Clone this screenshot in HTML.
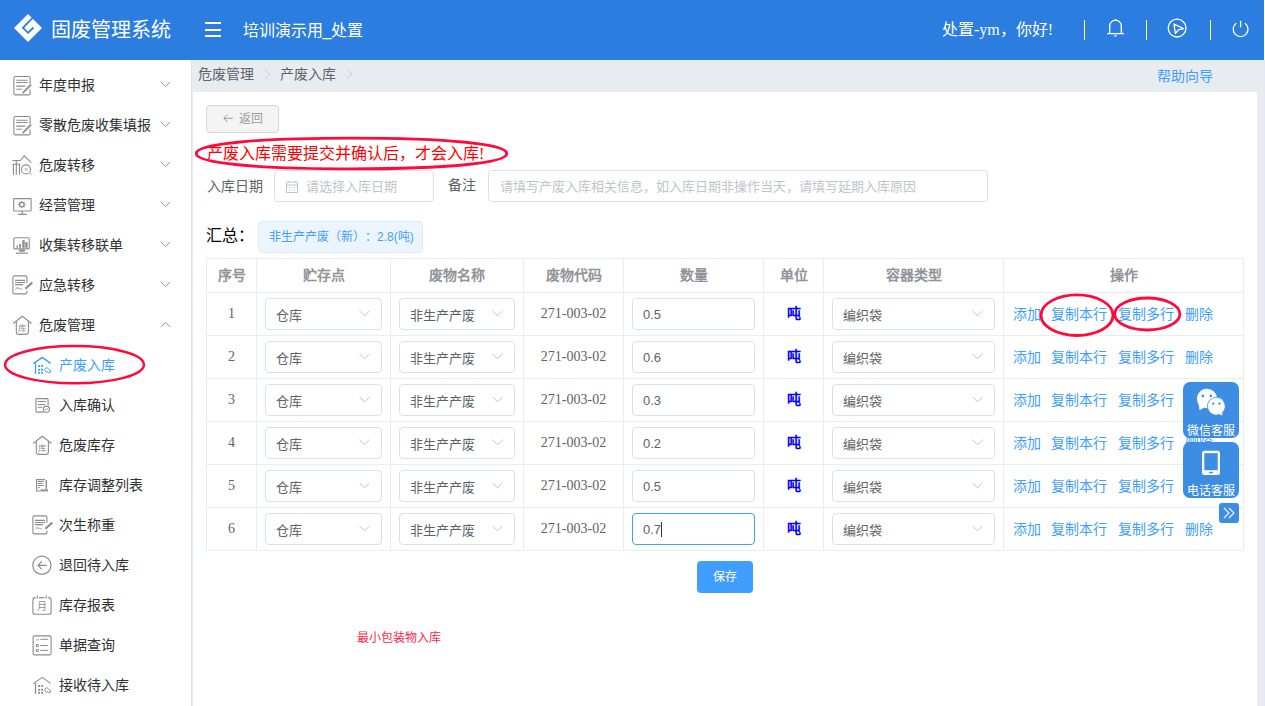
<!DOCTYPE html>
<html lang="zh-CN">
<head>
<meta charset="utf-8">
<style>
*{box-sizing:border-box;margin:0;padding:0}
html,body{width:1265px;height:706px;overflow:hidden;background:#fff;font-family:"Liberation Sans",sans-serif;text-spacing-trim:space-all;}
.abs{position:absolute}
.hdr{position:absolute;left:0;top:0;width:1264px;height:60px;background:#2c7de0;color:#fff}
.side{position:absolute;left:0;top:60px;width:192px;height:646px;background:#fff;border-right:1px solid #e2e2e2}
.main{position:absolute;left:192px;top:60px;width:1073px;border-right:1px solid #e4e8f2;height:646px;background:#e8ecf1}
.card{position:absolute;left:193px;top:92px;width:1064px;height:614px;background:#fff}
.mi{position:absolute;left:0;width:190px;height:40px;line-height:40px;font-size:14px;color:#303133;white-space:nowrap}
.mi .t{position:absolute;left:38.7px;top:0}
.mi.sub .t{left:58.7px}
.mi svg.ic{position:absolute;left:12px;top:10px;width:20px;height:20px}
.mi.sub svg.ic{left:32px}
.chev{position:absolute;left:160px;top:16px;width:11px;height:7px}
.bc{position:absolute;top:60px;height:32px;line-height:28px;font-size:14px;color:#606266}
.lbl{position:absolute;font-size:14px;color:#606266;line-height:20px}
.inp{position:absolute;border:1px solid #dcdfe6;border-radius:4px;background:#fff}
.ph{position:absolute;font-size:13px;color:#c0c4cc;white-space:nowrap}
table.tb{position:absolute;left:206px;top:258px;border-collapse:collapse;table-layout:fixed}
.tb td,.tb th{border:1px solid #e9ecf4;padding:0;position:relative;text-align:center}
.tb th{height:34px;font-size:14px;color:#909399;font-weight:bold;padding-bottom:3px}
.tb td{height:43px}
.sel{position:absolute;top:5px;height:32px;border:1px solid #dcdfe6;border-radius:4px;background:#fff;text-align:left}
.sel span{position:absolute;left:10px;top:0;line-height:34px;font-size:13px;color:#606266;white-space:nowrap}
.sel svg{position:absolute;top:11px;width:11px;height:7px}
.num{font-family:"Liberation Serif",serif;font-size:14px;color:#606266;position:relative;top:-1px}
.ops{position:absolute;left:0;top:0;width:100%;height:43px;line-height:43px;font-size:14px;color:#409eff;white-space:nowrap;text-align:left}
.ops span{position:absolute;top:0}
.dun{color:#0000ff;font-weight:bold;font-size:14px;position:relative;top:-2px}
</style>
</head>
<body>
<div class="main"></div>
<div class="card"></div>

<!-- header -->
<div class="hdr">
  <svg class="abs" style="left:13px;top:13px" width="30" height="30" viewBox="0 0 30 30">
    <path d="M15 1 L29 15 L15 29 L1 15 Z" fill="#fff"/>
    <path d="M20.4 4.2 L9.9 14.8 L15.1 19.8 L20.5 14.5" fill="none" stroke="#2c7de0" stroke-width="1.8"/>
  </svg>
  <div class="abs" style="left:51px;top:16px;font-size:20px;line-height:28px;white-space:nowrap">固废管理系统</div>
  <div class="abs" style="left:205px;top:22px;width:16px;height:2px;background:#fff"></div>
  <div class="abs" style="left:205px;top:29px;width:16px;height:2px;background:#fff"></div>
  <div class="abs" style="left:205px;top:35px;width:16px;height:2px;background:#fff"></div>
  <div class="abs" style="left:242.5px;top:20px;font-size:16px;line-height:22px;white-space:nowrap">培训演示用_处置</div>
  <div class="abs" style="left:942px;top:19px;font-size:16px;line-height:22px;white-space:nowrap;font-family:'Liberation Serif',serif">处置-ym，你好!</div>
  <div class="abs" style="left:1084px;top:20px;width:1px;height:20px;background:#fff"></div>
  <div class="abs" style="left:1146px;top:20px;width:1px;height:20px;background:#fff"></div>
  <div class="abs" style="left:1210px;top:20px;width:1px;height:20px;background:#fff"></div>
  <svg class="abs" style="left:1100px;top:14px" width="30" height="26" viewBox="1100 14 30 26" fill="none" stroke="#fff" stroke-width="1.3">
    <path d="M1109.7 33 V26 A5.8 5.8 0 0 1 1121.3 26 V33"/>
    <path d="M1107 33.6 H1124"/>
    <path d="M1115.5 19.2 V20.5"/>
    <path d="M1114.3 35.8 H1116.7"/>
  </svg>
  <svg class="abs" style="left:1160px;top:12px" width="34" height="34" viewBox="1160 12 34 34" fill="none" stroke="#fff" stroke-width="1.3">
    <circle cx="1177.1" cy="28.1" r="8.9"/>
    <path d="M1174 24 L1183.5 28.6 L1178.3 29.8 L1175.3 33.6 Z" stroke-linejoin="round"/>
  </svg>
  <svg class="abs" style="left:1226px;top:14px" width="30" height="30" viewBox="1226 14 30 30" fill="none" stroke="#fff" stroke-width="1.3">
    <path d="M1236.2 23.2 A7.4 7.4 0 1 0 1245 23.2"/>
    <path d="M1240.6 20.8 V27.4"/>
  </svg>
</div>

<!-- sidebar -->
<div class="side"></div>
<div class="mi" style="top:65px"><span class="t">年度申报</span><svg class="chev" viewBox="0 0 11 7"><path d="M0.8 1 L5.5 5.6 L10.2 1" fill="none" stroke="#909399" stroke-width="1"/></svg></div>
<div class="mi" style="top:105px"><span class="t">零散危废收集填报</span><svg class="chev" viewBox="0 0 11 7"><path d="M0.8 1 L5.5 5.6 L10.2 1" fill="none" stroke="#909399" stroke-width="1"/></svg></div>
<div class="mi" style="top:145px"><span class="t">危废转移</span><svg class="chev" viewBox="0 0 11 7"><path d="M0.8 1 L5.5 5.6 L10.2 1" fill="none" stroke="#909399" stroke-width="1"/></svg></div>
<div class="mi" style="top:185px"><span class="t">经营管理</span><svg class="chev" viewBox="0 0 11 7"><path d="M0.8 1 L5.5 5.6 L10.2 1" fill="none" stroke="#909399" stroke-width="1"/></svg></div>
<div class="mi" style="top:225px"><span class="t">收集转移联单</span><svg class="chev" viewBox="0 0 11 7"><path d="M0.8 1 L5.5 5.6 L10.2 1" fill="none" stroke="#909399" stroke-width="1"/></svg></div>
<div class="mi" style="top:265px"><span class="t">应急转移</span><svg class="chev" viewBox="0 0 11 7"><path d="M0.8 1 L5.5 5.6 L10.2 1" fill="none" stroke="#909399" stroke-width="1"/></svg></div>
<div class="mi" style="top:305px"><span class="t">危废管理</span><svg class="chev" viewBox="0 0 11 7"><path d="M0.8 6 L5.5 1.4 L10.2 6" fill="none" stroke="#909399" stroke-width="1"/></svg></div>
<div class="mi sub" style="top:345px;color:#409eff"><span class="t">产废入库</span></div>
<div class="mi sub" style="top:385px"><span class="t">入库确认</span></div>
<div class="mi sub" style="top:425px"><span class="t">危废库存</span></div>
<div class="mi sub" style="top:465px"><span class="t">库存调整列表</span></div>
<div class="mi sub" style="top:505px"><span class="t">次生称重</span></div>
<div class="mi sub" style="top:545px"><span class="t">退回待入库</span></div>
<div class="mi sub" style="top:585px"><span class="t">库存报表</span></div>
<div class="mi sub" style="top:625px"><span class="t">单据查询</span></div>
<div class="mi sub" style="top:665px"><span class="t">接收待入库</span></div>
<svg class="abs" style="left:0px;top:60px" width="40" height="40" viewBox="0 60 40 40" fill="none" stroke="#8c8c8c" stroke-width="1.1"><g transform="translate(0 0)"><path d="M30.1 83.8 V78 Q30.1 76.5 28.6 76.5 H15.4 Q13.9 76.5 13.9 78 V93.4 Q13.9 94.9 15.4 94.9 H28.6 Q30.1 94.9 30.1 93.4 V89.5"/><path d="M16.3 80.2 H27.6 M16.3 82.5 H27.6 M16.3 86.1 H25.3 M16.3 89.2 H21.9"/><path d="M22.6 93.1 L31.1 84.6" stroke-width="1.8"/></g></svg><svg class="abs" style="left:0px;top:100px" width="40" height="40" viewBox="0 100 40 40" fill="none" stroke="#8c8c8c" stroke-width="1.1"><g transform="translate(0 40)"><path d="M30.1 83.8 V78 Q30.1 76.5 28.6 76.5 H15.4 Q13.9 76.5 13.9 78 V93.4 Q13.9 94.9 15.4 94.9 H28.6 Q30.1 94.9 30.1 93.4 V89.5"/><path d="M16.3 80.2 H27.6 M16.3 82.5 H27.6 M16.3 86.1 H25.3 M16.3 89.2 H21.9"/><path d="M22.6 93.1 L31.1 84.6" stroke-width="1.8"/></g></svg><svg class="abs" style="left:0px;top:140px" width="40" height="40" viewBox="0 140 40 40" fill="none" stroke="#8c8c8c" stroke-width="1.1"><path d="M12.4 160.5 H20.3 L24.1 155.9 L31.4 162.7"/><path d="M16.3 160.5 V164.3 M12.4 164.3 H20.3 M13.4 164.3 V174.8 M16.3 164.3 V174.8 M19.5 164.3 V174.8"/><circle cx="26" cy="169.4" r="4.5"/><path d="M30 173.6 L31.6 174.8 M24.8 168.2 L27.2 170.6 M27.2 168.2 L24.8 170.6" stroke-width="0.8"/></svg><svg class="abs" style="left:0px;top:180px" width="40" height="40" viewBox="0 180 40 40" fill="none" stroke="#8c8c8c" stroke-width="1.1"><rect x="13.7" y="198.6" width="17.4" height="12.4" rx="0.8"/><path d="M22.3 211 V214.4 M17.9 214.4 H26.8" stroke-width="1.2"/><circle cx="21.9" cy="204.6" r="2.2" stroke-width="1.3"/><path d="M21.9 200.9 V202 M21.9 207.2 V208.3 M18.2 204.6 H19.3 M24.5 204.6 H25.6 M19.3 202 L20 202.7 M23.8 206.5 L24.5 207.2 M19.3 207.2 L20 206.5 M23.8 202.7 L24.5 202" stroke-width="1.2"/></svg><svg class="abs" style="left:0px;top:220px" width="40" height="40" viewBox="0 220 40 40" fill="none" stroke="#8c8c8c" stroke-width="1.1"><rect x="13.9" y="237.7" width="15.4" height="11.2" rx="1"/><path d="M19.1 250.6 H24.9" stroke-width="2.2"/><path d="M15.9 253.2 H28" stroke-width="1.2"/><rect x="16.5" y="245.5" width="1.4" height="2.3" fill="#8c8c8c" stroke="none"/><rect x="19.1" y="243.9" width="1.8" height="3.9" fill="#8c8c8c" stroke="none"/><rect x="22.3" y="240.1" width="2.4" height="7.7" fill="#8c8c8c" stroke="none"/><rect x="25.3" y="242.1" width="2.3" height="5.7" fill="#8c8c8c" stroke="none"/></svg><svg class="abs" style="left:0px;top:260px" width="40" height="40" viewBox="0 260 40 40" fill="none" stroke="#8c8c8c" stroke-width="1.1"><g transform="translate(0 0)"><path d="M26.9 282.9 V277.4 Q26.9 275.9 25.4 275.9 H14.4 Q12.9 275.9 12.9 277.4 V292.4 Q12.9 293.9 14.4 293.9 H25.4 Q26.9 293.9 26.9 292.4 V290.8"/><path d="M15 280.4 H25.1 M15 282.5 H25.1 M15 284.6 H23.1"/><path d="M15.6 289.4 L17.2 287.2 L18.4 289 L19.4 287.8 L20.6 289 L22.4 289.2" stroke-width="0.8"/><path d="M25.4 288.8 L32.3 282.5" stroke-width="2.2"/></g></svg><svg class="abs" style="left:0px;top:300px" width="40" height="40" viewBox="0 300 40 40" fill="none" stroke="#8c8c8c" stroke-width="1.1"><g transform="translate(0 0)"><path d="M13.2 323.5 L22.3 316.2 L31.6 323.5"/><path d="M16.3 321.3 V332 Q16.3 334.4 18.7 334.4 H26 Q28.4 334.4 28.4 332 V321.3"/><text x="22.3" y="331.2" font-size="8.5" text-anchor="middle" fill="#8c8c8c" stroke="none" font-family="Liberation Sans,sans-serif">库</text></g></svg><svg class="abs" style="left:20px;top:340px" width="40" height="40" viewBox="20 340 40 40" fill="none" stroke="#409eff" stroke-width="1.5"><g transform="translate(0 0)"><path d="M33.4 363.6 L42.3 357.4 L50.6 363.4"/><path d="M35.5 363 V374" stroke-width="1.3"/><rect x="38.15" y="365.05" width="1.9" height="1.9" fill="#409eff" stroke="none"/><rect x="38.15" y="368.85" width="1.9" height="1.9" fill="#409eff" stroke="none"/><rect x="38.15" y="371.85" width="1.9" height="1.9" fill="#409eff" stroke="none"/><rect x="41.15" y="365.05" width="1.9" height="1.9" fill="#409eff" stroke="none"/><rect x="41.15" y="368.85" width="1.9" height="1.9" fill="#409eff" stroke="none"/><rect x="41.15" y="371.85" width="1.9" height="1.9" fill="#409eff" stroke="none"/><path d="M44.6 369.6 L47 367.4 L48.6 369.2 L50.4 370.2 L50.4 372.4 L48.6 372.4 L47.2 371.6 L46.6 372.6 Z" stroke-width="1"/></g></svg><svg class="abs" style="left:20px;top:380px" width="40" height="40" viewBox="20 380 40 40" fill="none" stroke="#8c8c8c" stroke-width="1.1"><path d="M48.1 405.2 V399.6 Q48.1 398.6 47.1 398.6 H36.9 Q35.9 398.6 35.9 399.6 V411.1 Q35.9 412.1 36.9 412.1 H43.5"/><path d="M37.7 401.5 H45.9 M37.7 404.5 H44.9 M37.7 407.3 H42.3"/><circle cx="46.4" cy="409.2" r="3.1"/><path d="M44.9 409.2 L46 410.3 L47.9 408.2" stroke-width="0.9"/></svg><svg class="abs" style="left:20px;top:420px" width="40" height="40" viewBox="20 420 40 40" fill="none" stroke="#8c8c8c" stroke-width="1.1"><g transform="translate(20 120)"><path d="M13.2 323.5 L22.3 316.2 L31.6 323.5"/><path d="M16.3 321.3 V332 Q16.3 334.4 18.7 334.4 H26 Q28.4 334.4 28.4 332 V321.3"/><text x="22.3" y="331.2" font-size="8.5" text-anchor="middle" fill="#8c8c8c" stroke="none" font-family="Liberation Sans,sans-serif">库</text></g></svg><svg class="abs" style="left:20px;top:460px" width="40" height="40" viewBox="20 460 40 40" fill="none" stroke="#8c8c8c" stroke-width="1.1"><path d="M45 479.6 H36.6 V491 H40.5"/><path d="M37.9 481.5 H43.9 M37.9 483.5 H42.9 M37.9 485.5 H43.9 M37.9 487.7 H40" stroke-width="1"/><path d="M46.3 480 V489" stroke-width="1.4"/><path d="M40.5 490.4 H48" stroke-width="2"/></svg><svg class="abs" style="left:20px;top:500px" width="40" height="40" viewBox="20 500 40 40" fill="none" stroke="#8c8c8c" stroke-width="1.1"><g transform="translate(20 240)"><path d="M26.9 282.9 V277.4 Q26.9 275.9 25.4 275.9 H14.4 Q12.9 275.9 12.9 277.4 V292.4 Q12.9 293.9 14.4 293.9 H25.4 Q26.9 293.9 26.9 292.4 V290.8"/><path d="M15 280.4 H25.1 M15 282.5 H25.1 M15 284.6 H23.1"/><path d="M15.6 289.4 L17.2 287.2 L18.4 289 L19.4 287.8 L20.6 289 L22.4 289.2" stroke-width="0.8"/><path d="M25.4 288.8 L32.3 282.5" stroke-width="2.2"/></g></svg><svg class="abs" style="left:20px;top:540px" width="40" height="40" viewBox="20 540 40 40" fill="none" stroke="#8c8c8c" stroke-width="1.1"><circle cx="41.9" cy="565.3" r="9.1" stroke-width="1.2"/><path d="M41.9 561.3 L37.9 565.3 L41.9 569.4 M37.9 565.3 H46.8" stroke-width="1.2"/></svg><svg class="abs" style="left:20px;top:580px" width="40" height="40" viewBox="20 580 40 40" fill="none" stroke="#8c8c8c" stroke-width="1.1"><path d="M35.6 597.6 H35.2 Q32.9 597.6 32.9 600 V612 Q32.9 614.3 35.2 614.3 H48.8 Q51.1 614.3 51.1 612 V600 Q51.1 597.6 48.8 597.6 H48.2 M39 597.6 H44.6"/><path d="M37.3 595.6 V598.6 M46.3 595.6 V598.6"/><text x="41.9" y="609.6" font-size="10" text-anchor="middle" fill="#8c8c8c" stroke="none" font-family="Liberation Sans,sans-serif">月</text></svg><svg class="abs" style="left:20px;top:620px" width="40" height="40" viewBox="20 620 40 40" fill="none" stroke="#8c8c8c" stroke-width="1.1"><rect x="33.1" y="635.9" width="18" height="19" rx="1.5"/><path d="M40.3 639.3 H48 M40.3 645.5 H48 M40.3 650.4 H48" stroke-width="1"/><path d="M35.9 639.4 L37 640.4 L38.9 638.8" stroke-width="0.9"/><rect x="36.3" y="644.5" width="2" height="2" stroke-width="0.9"/><rect x="36.3" y="649.4" width="2" height="2" stroke-width="0.9"/></svg><svg class="abs" style="left:20px;top:660px" width="40" height="40" viewBox="20 660 40 40" fill="none" stroke="#8c8c8c" stroke-width="1.1"><g transform="translate(0 320)"><path d="M33.4 363.6 L42.3 357.4 L50.6 363.4"/><path d="M35.5 363 V374" stroke-width="1.3"/><rect x="38.15" y="365.05" width="1.9" height="1.9" fill="#8c8c8c" stroke="none"/><rect x="38.15" y="368.85" width="1.9" height="1.9" fill="#8c8c8c" stroke="none"/><rect x="38.15" y="371.85" width="1.9" height="1.9" fill="#8c8c8c" stroke="none"/><rect x="41.15" y="365.05" width="1.9" height="1.9" fill="#8c8c8c" stroke="none"/><rect x="41.15" y="368.85" width="1.9" height="1.9" fill="#8c8c8c" stroke="none"/><rect x="41.15" y="371.85" width="1.9" height="1.9" fill="#8c8c8c" stroke="none"/><path d="M44.6 369.6 L47 367.4 L48.6 369.2 L50.4 370.2 L50.4 372.4 L48.6 372.4 L47.2 371.6 L46.6 372.6 Z" stroke-width="1"/></g></svg>

<!-- breadcrumb -->
<div class="bc" style="left:198px">危废管理</div>
<div class="bc" style="left:280px">产废入库</div>
<div class="abs" style="left:1157px;top:66px;font-size:14px;line-height:20px;color:#409eff">帮助向导</div>
<svg class="abs" style="left:263px;top:68px" width="10" height="12" viewBox="0 0 10 12"><path d="M2.3 1.5 L6.8 6 L2.3 10.5" fill="none" stroke="#c6cad2" stroke-width="1"/></svg>
<svg class="abs" style="left:345px;top:68px" width="10" height="12" viewBox="0 0 10 12"><path d="M2.3 1.5 L6.8 6 L2.3 10.5" fill="none" stroke="#c6cad2" stroke-width="1"/></svg>


<!-- back button -->
<div class="abs" style="left:206px;top:105px;width:73px;height:28px;border:1px solid #d6d6d6;border-radius:4px;background:#f4f4f4"></div>
<svg class="abs" style="left:222px;top:112px" width="12" height="12" viewBox="0 0 12 12"><path d="M5.5 2.7 L1.8 6.3 L5.5 9.9 M1.8 6.3 H10.8" fill="none" stroke="#999" stroke-width="1"/></svg>
<div class="abs" style="left:239px;top:110px;font-size:12px;line-height:18px;color:#999">返回</div>

<!-- notice -->
<div class="abs" style="left:207px;top:143px;font-size:16px;line-height:22px;color:#ff0000;white-space:nowrap">产废入库需要提交并确认后，才会入库<span style="font-family:'Liberation Serif',serif">!</span></div>

<!-- form -->
<div class="lbl" style="left:207px;top:176px">入库日期</div>
<div class="inp" style="left:274px;top:170px;width:160px;height:32px"></div>
<svg class="abs" style="left:284px;top:179px" width="16" height="16" viewBox="0 0 16 16" fill="none" stroke="#c0c4cc" stroke-width="1"><rect x="2.5" y="3" width="11" height="10.5" rx="0.5"/><path d="M2.5 6 H13.5 M5 1.8 V3.5 M11 1.8 V3.5 M5 8.5 H6 M7.5 8.5 H8.5 M10 8.5 H11 M5 11 H6 M7.5 11 H8.5 M10 11 H11"/></svg>
<div class="ph" style="left:306px;top:177px;line-height:19px">请选择入库日期</div>
<div class="lbl" style="left:448px;top:175px">备注</div>
<div class="inp" style="left:488px;top:170px;width:500px;height:32px"></div>
<div class="ph" style="left:500px;top:177px;line-height:19px">请填写产废入库相关信息，如入库日期非操作当天，请填写延期入库原因</div>

<!-- summary -->
<div class="abs" style="left:206px;top:225px;font-size:16px;line-height:22px;color:#000">汇总：</div>
<div class="abs" style="left:258px;top:221px;width:165px;height:32px;border:1px solid #d9ecff;background:#ecf5ff;border-radius:4px"></div>
<div class="abs" style="left:269px;top:228px;font-size:12px;line-height:18px;color:#409eff;white-space:nowrap">非生产产废（新）：2.8(吨)</div>
<table class="tb"><colgroup><col style="width:50px"><col style="width:134px"><col style="width:133px"><col style="width:100px"><col style="width:140px"><col style="width:60px"><col style="width:180px"><col style="width:240px"></colgroup>
<tr><th>序号</th><th>贮存点</th><th>废物名称</th><th>废物代码</th><th>数量</th><th>单位</th><th>容器类型</th><th>操作</th></tr>
<tr><td><span class="num">1</span></td><td><div class="sel" style="left:8px;width:117px"><span>仓库</span><svg style="right:11px" viewBox="0 0 11 7"><path d="M0.5 0.9 L5.5 5.7 L10.5 0.9" fill="none" stroke="#c0c4cc" stroke-width="1"/></svg></div></td><td><div class="sel" style="left:8px;width:116px"><span>非生产产废</span><svg style="right:11px" viewBox="0 0 11 7"><path d="M0.5 0.9 L5.5 5.7 L10.5 0.9" fill="none" stroke="#c0c4cc" stroke-width="1"/></svg></div></td><td><span class="num">271-003-02</span></td><td><div class="sel" style="left:8px;width:123px"><span style="font-size:13px;top:-1px">0.5</span></div></td><td><span class="dun">吨</span></td><td><div class="sel" style="left:8px;width:163px"><span>编织袋</span><svg style="right:11px" viewBox="0 0 11 7"><path d="M0.5 0.9 L5.5 5.7 L10.5 0.9" fill="none" stroke="#c0c4cc" stroke-width="1"/></svg></div></td><td><div class="ops"><span style="left:9px">添加</span><span style="left:47px">复制本行</span><span style="left:114px">复制多行</span><span style="left:181px">删除</span></div></td></tr>
<tr><td><span class="num">2</span></td><td><div class="sel" style="left:8px;width:117px"><span>仓库</span><svg style="right:11px" viewBox="0 0 11 7"><path d="M0.5 0.9 L5.5 5.7 L10.5 0.9" fill="none" stroke="#c0c4cc" stroke-width="1"/></svg></div></td><td><div class="sel" style="left:8px;width:116px"><span>非生产产废</span><svg style="right:11px" viewBox="0 0 11 7"><path d="M0.5 0.9 L5.5 5.7 L10.5 0.9" fill="none" stroke="#c0c4cc" stroke-width="1"/></svg></div></td><td><span class="num">271-003-02</span></td><td><div class="sel" style="left:8px;width:123px"><span style="font-size:13px;top:-1px">0.6</span></div></td><td><span class="dun">吨</span></td><td><div class="sel" style="left:8px;width:163px"><span>编织袋</span><svg style="right:11px" viewBox="0 0 11 7"><path d="M0.5 0.9 L5.5 5.7 L10.5 0.9" fill="none" stroke="#c0c4cc" stroke-width="1"/></svg></div></td><td><div class="ops"><span style="left:9px">添加</span><span style="left:47px">复制本行</span><span style="left:114px">复制多行</span><span style="left:181px">删除</span></div></td></tr>
<tr><td><span class="num">3</span></td><td><div class="sel" style="left:8px;width:117px"><span>仓库</span><svg style="right:11px" viewBox="0 0 11 7"><path d="M0.5 0.9 L5.5 5.7 L10.5 0.9" fill="none" stroke="#c0c4cc" stroke-width="1"/></svg></div></td><td><div class="sel" style="left:8px;width:116px"><span>非生产产废</span><svg style="right:11px" viewBox="0 0 11 7"><path d="M0.5 0.9 L5.5 5.7 L10.5 0.9" fill="none" stroke="#c0c4cc" stroke-width="1"/></svg></div></td><td><span class="num">271-003-02</span></td><td><div class="sel" style="left:8px;width:123px"><span style="font-size:13px;top:-1px">0.3</span></div></td><td><span class="dun">吨</span></td><td><div class="sel" style="left:8px;width:163px"><span>编织袋</span><svg style="right:11px" viewBox="0 0 11 7"><path d="M0.5 0.9 L5.5 5.7 L10.5 0.9" fill="none" stroke="#c0c4cc" stroke-width="1"/></svg></div></td><td><div class="ops"><span style="left:9px">添加</span><span style="left:47px">复制本行</span><span style="left:114px">复制多行</span><span style="left:181px">删除</span></div></td></tr>
<tr><td><span class="num">4</span></td><td><div class="sel" style="left:8px;width:117px"><span>仓库</span><svg style="right:11px" viewBox="0 0 11 7"><path d="M0.5 0.9 L5.5 5.7 L10.5 0.9" fill="none" stroke="#c0c4cc" stroke-width="1"/></svg></div></td><td><div class="sel" style="left:8px;width:116px"><span>非生产产废</span><svg style="right:11px" viewBox="0 0 11 7"><path d="M0.5 0.9 L5.5 5.7 L10.5 0.9" fill="none" stroke="#c0c4cc" stroke-width="1"/></svg></div></td><td><span class="num">271-003-02</span></td><td><div class="sel" style="left:8px;width:123px"><span style="font-size:13px;top:-1px">0.2</span></div></td><td><span class="dun">吨</span></td><td><div class="sel" style="left:8px;width:163px"><span>编织袋</span><svg style="right:11px" viewBox="0 0 11 7"><path d="M0.5 0.9 L5.5 5.7 L10.5 0.9" fill="none" stroke="#c0c4cc" stroke-width="1"/></svg></div></td><td><div class="ops"><span style="left:9px">添加</span><span style="left:47px">复制本行</span><span style="left:114px">复制多行</span><span style="left:181px">删除</span></div></td></tr>
<tr><td><span class="num">5</span></td><td><div class="sel" style="left:8px;width:117px"><span>仓库</span><svg style="right:11px" viewBox="0 0 11 7"><path d="M0.5 0.9 L5.5 5.7 L10.5 0.9" fill="none" stroke="#c0c4cc" stroke-width="1"/></svg></div></td><td><div class="sel" style="left:8px;width:116px"><span>非生产产废</span><svg style="right:11px" viewBox="0 0 11 7"><path d="M0.5 0.9 L5.5 5.7 L10.5 0.9" fill="none" stroke="#c0c4cc" stroke-width="1"/></svg></div></td><td><span class="num">271-003-02</span></td><td><div class="sel" style="left:8px;width:123px"><span style="font-size:13px;top:-1px">0.5</span></div></td><td><span class="dun">吨</span></td><td><div class="sel" style="left:8px;width:163px"><span>编织袋</span><svg style="right:11px" viewBox="0 0 11 7"><path d="M0.5 0.9 L5.5 5.7 L10.5 0.9" fill="none" stroke="#c0c4cc" stroke-width="1"/></svg></div></td><td><div class="ops"><span style="left:9px">添加</span><span style="left:47px">复制本行</span><span style="left:114px">复制多行</span><span style="left:181px">删除</span></div></td></tr>
<tr><td><span class="num">6</span></td><td><div class="sel" style="left:8px;width:117px"><span>仓库</span><svg style="right:11px" viewBox="0 0 11 7"><path d="M0.5 0.9 L5.5 5.7 L10.5 0.9" fill="none" stroke="#c0c4cc" stroke-width="1"/></svg></div></td><td><div class="sel" style="left:8px;width:116px"><span>非生产产废</span><svg style="right:11px" viewBox="0 0 11 7"><path d="M0.5 0.9 L5.5 5.7 L10.5 0.9" fill="none" stroke="#c0c4cc" stroke-width="1"/></svg></div></td><td><span class="num">271-003-02</span></td><td><div class="sel" style="left:8px;width:123px;border-color:#409eff"><span style="font-size:13px;top:-1px">0.7<i style="display:inline-block;width:1px;height:15px;background:#303133;vertical-align:-3px"></i></span></div></td><td><span class="dun">吨</span></td><td><div class="sel" style="left:8px;width:163px"><span>编织袋</span><svg style="right:11px" viewBox="0 0 11 7"><path d="M0.5 0.9 L5.5 5.7 L10.5 0.9" fill="none" stroke="#c0c4cc" stroke-width="1"/></svg></div></td><td><div class="ops"><span style="left:9px">添加</span><span style="left:47px">复制本行</span><span style="left:114px">复制多行</span><span style="left:181px">删除</span></div></td></tr>
</table>

<!-- save -->
<div class="abs" style="left:697px;top:561px;width:56px;height:32px;background:#409eff;border-radius:4px;color:#fff;font-size:12px;line-height:32px;text-align:center">保存</div>
<div class="abs" style="left:357px;top:629px;font-size:12px;line-height:18px;color:#ff1f4b">最小包装物入库</div>

<!-- floating -->
<div class="abs" style="left:1183px;top:382px;width:56px;height:56px;background:#3d8de2;border-radius:7px"></div>
<div class="abs" style="left:1183px;top:423px;width:56px;font-size:12px;line-height:16px;color:#fff;text-align:center">微信客服</div>
<div class="abs" style="left:1183px;top:442px;width:56px;height:56px;background:#3d8de2;border-radius:7px"></div>
<div class="abs" style="left:1183px;top:483px;width:56px;font-size:12px;line-height:16px;color:#fff;text-align:center">电话客服</div>
<div class="abs" style="left:1219px;top:503px;width:20px;height:20px;background:#3d8de2;border-radius:3px"></div>
<svg class="abs" style="left:1219px;top:503px" width="20" height="20" viewBox="0 0 20 20" fill="none" stroke="#fff" stroke-width="1.1"><path d="M5 5 L10 10 L5 15 M10 5 L15 10 L10 15"/></svg>
<svg class="abs" style="left:1183px;top:382px" width="56" height="40" viewBox="0 0 56 40">
  <path d="M24 6.8 A10 10 0 0 0 15.6 22.2 L16.6 28.3 L21 25.8 A10 10 0 0 0 34 16.5 A10 10 0 0 0 24 6.8 Z" fill="#fff"/>
  <circle cx="19.8" cy="13.9" r="1.3" fill="#3d8de2"/><circle cx="27.8" cy="13.9" r="1.3" fill="#3d8de2"/>
  <path d="M33.3 15.3 A8.9 8.9 0 1 0 36.5 32.5 L39.6 34.3 L39.8 30.2 A8.9 8.9 0 0 0 33.3 15.3 Z" fill="#fff" stroke="#3d8de2" stroke-width="0.8"/>
  <circle cx="30.2" cy="21.6" r="1.2" fill="#3d8de2"/><circle cx="36.5" cy="21.6" r="1.2" fill="#3d8de2"/>
</svg>
<svg class="abs" style="left:1200px;top:449px" width="22" height="28" viewBox="0 0 22 28">
  <rect x="2" y="1.8" width="18" height="24.2" rx="2.5" fill="#fff"/>
  <rect x="4.3" y="4.2" width="13.4" height="17" fill="#3d8de2"/>
  <rect x="9" y="22.8" width="4" height="1.4" rx="0.7" fill="#3d8de2"/>
</svg>

<!-- annotation ellipses -->
<svg class="abs" style="left:0;top:0;pointer-events:none" width="1265" height="706" viewBox="0 0 1265 706" fill="none" stroke="#ff0a3c" stroke-width="2.8">
  <ellipse cx="74.5" cy="364.7" rx="69.4" ry="18.6" stroke-width="2.5"/>
  <path d="M196.2 153.5 C196.2 144.0 255.2 138.1 351.5 138.1 C447.8 138.1 506.8 144.0 506.8 153.5 C506.8 163.0 447.8 168.9 351.5 168.9 C255.2 168.9 196.2 163.0 196.2 153.5 Z"/>
  <ellipse cx="1077" cy="315.2" rx="36" ry="20.3"/>
  <ellipse cx="1147.3" cy="314" rx="32.6" ry="16"/>
</svg>
</body>
</html>
